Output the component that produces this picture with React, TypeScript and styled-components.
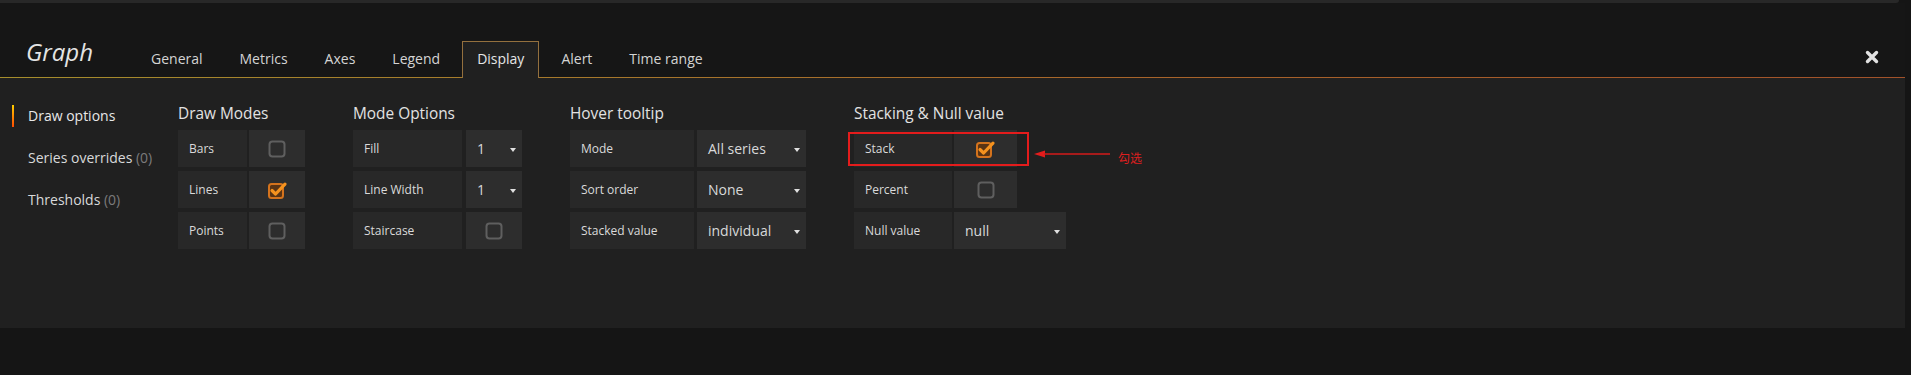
import React from 'react';
import styled, { createGlobalStyle, css } from 'styled-components';

const GlobalStyle = createGlobalStyle`
  html, body { margin: 0; padding: 0; background: #151515; }
  body {
    font-family: "Open Sans", "Liberation Sans", sans-serif;
    color: #d8d9da;
  }
  * { box-sizing: border-box; }
`;

const Page = styled.div`
  width: 1905px;
`;

const TopStrip = styled.div`
  height: 3px;
  margin-right: 6px;
  background: #282828;
  border-radius: 0 0 3px 0;
`;

const Header = styled.div`
  display: flex;
  align-items: flex-end;
  height: 75px;
  padding: 0 26px;
  background: #161616;
  border-bottom: 1px solid;
  border-image: linear-gradient(90deg, #a68e2c 0%, #a8642a 60%, #a2522a 100%) 1;
`;

const Title = styled.div`
  width: 110px;
  margin-bottom: 9px;
  font-size: 24px;
  line-height: 32px;
  font-style: italic;
  color: #e4e4e4;
`;

const Tabs = styled.nav`
  display: flex;
  align-items: flex-end;
`;

const Tab = styled.div<{ $active?: boolean }>`
  height: 37px;
  margin: 0 7px -1px 0;
  padding: 0 14px 2px;
  border: 1px solid transparent;
  border-bottom: none;
  font-size: 14px;
  line-height: 34px;
  color: #d4d4d4;
  white-space: nowrap;
  ${(p) =>
    p.$active &&
    css`
      background: #202020;
      border-color: #94703e;
      color: #e6e6e6;
    `}
`;

const Close = styled.div`
  margin: 0 0 13px auto;
  width: 14px;
  height: 14px;
  display: flex;
`;

const Panel = styled.div`
  display: flex;
  height: 250px;
  background: #202020;
`;

const SideMenu = styled.ul`
  list-style: none;
  margin: 0;
  width: 178px;
  flex: none;
  padding: 27px 0 0 12px;
`;

const MenuItem = styled.li<{ $active?: boolean }>`
  font-size: 14px;
  line-height: 22px;
  padding-left: 14px;
  margin-bottom: 20px;
  border-left: 2px solid transparent;
  color: #d8d9da;
  white-space: nowrap;
  ${(p) =>
    p.$active &&
    css`
      border-image: linear-gradient(180deg, #ffd500 0%, #ff4400 100%) 1;
      color: #e8e8e8;
    `}
`;

const Count = styled.span`
  color: #7b7b7b;
`;

const Sections = styled.div`
  display: flex;
  gap: 48px;
  padding-top: 26px;
`;

const Section = styled.section`
  display: flex;
  flex-direction: column;
`;

const Heading = styled.h5`
  margin: 0 0 6px;
  font-size: 15.4px;
  font-weight: 500;
  line-height: 20px;
  color: #e2e2e2;
  white-space: nowrap;
`;

const Row = styled.div<{ $gap: number }>`
  position: relative;
  display: flex;
  height: 37px;
  margin-bottom: 4px;
  gap: ${(p) => p.$gap}px;
`;

const Label = styled.div<{ $w: number }>`
  width: ${(p) => p.$w}px;
  display: flex;
  align-items: center;
  padding-left: 11px;
  background: #282828;
  font-size: 12px;
  color: #dadada;
  white-space: nowrap;
`;

const SwitchCell = styled.div<{ $w: number }>`
  width: ${(p) => p.$w}px;
  display: flex;
  align-items: center;
  justify-content: center;
  background: #2d2d2d;
`;

const Select = styled.div<{ $w: number }>`
  width: ${(p) => p.$w}px;
  display: flex;
  align-items: center;
  justify-content: space-between;
  padding: 0 6px 0 11px;
  background: #2d2d2d;
  font-size: 14px;
  color: #d8d9da;
  white-space: nowrap;
`;

const Caret = styled.span`
  width: 0;
  height: 0;
  margin-top: 2px;
  border-left: 3.5px solid transparent;
  border-right: 3.5px solid transparent;
  border-top: 4px solid #e0e0e0;
`;

const Highlight = styled.div`
  position: absolute;
  left: -6px;
  top: 2px;
  width: 181px;
  height: 34px;
  border: 2px solid #e41c1c;
  pointer-events: none;
`;

const Arrow = styled.svg`
  position: absolute;
  left: 180px;
  top: 19px;
`;

const Note = styled.span`
  position: absolute;
  left: 264px;
  top: 21px;
  font-family: "Noto Sans CJK SC", "Noto Sans", sans-serif;
  font-size: 12px;
  line-height: 14px;
  color: #dc1f1f;
  white-space: nowrap;
`;

const Unchecked = () => (
  <svg width="18" height="18" viewBox="0 0 18 18">
    <rect x="1.5" y="1.5" width="15" height="15" rx="3" fill="none" stroke="#5f5f5f" strokeWidth="2" />
  </svg>
);

const Checked = () => (
  <svg width="21" height="20" viewBox="0 0 21 20">
    <rect x="2" y="4" width="14" height="14" rx="2.5" fill="#5a3414" stroke="#d4731d" strokeWidth="2" />
    <polyline points="5,10.5 8.6,14 18,4.2" fill="none" stroke="#f5921e" strokeWidth="3.2" strokeLinecap="round" strokeLinejoin="round" />
  </svg>
);

const CloseIcon = () => (
  <svg width="14" height="14" viewBox="0 0 14 14">
    <path d="M2.5 2.5 L11.5 11.5 M11.5 2.5 L2.5 11.5" stroke="#e2e2e2" strokeWidth="3.4" strokeLinecap="round" />
  </svg>
);

type Field =
  | { label: string; kind: 'check'; checked?: boolean; annotate?: boolean }
  | { label: string; kind: 'select'; value: string };

type SectionDef = {
  title: string;
  labelW: number;
  gap: number;
  checkW: number;
  selectW: number;
  fields: Field[];
};

const sections: SectionDef[] = [
  {
    title: 'Draw Modes',
    labelW: 69,
    gap: 2,
    checkW: 56,
    selectW: 56,
    fields: [
      { label: 'Bars', kind: 'check' },
      { label: 'Lines', kind: 'check', checked: true },
      { label: 'Points', kind: 'check' },
    ],
  },
  {
    title: 'Mode Options',
    labelW: 109,
    gap: 4,
    checkW: 56,
    selectW: 56,
    fields: [
      { label: 'Fill', kind: 'select', value: '1' },
      { label: 'Line Width', kind: 'select', value: '1' },
      { label: 'Staircase', kind: 'check' },
    ],
  },
  {
    title: 'Hover tooltip',
    labelW: 124,
    gap: 3,
    checkW: 56,
    selectW: 109,
    fields: [
      { label: 'Mode', kind: 'select', value: 'All series' },
      { label: 'Sort order', kind: 'select', value: 'None' },
      { label: 'Stacked value', kind: 'select', value: 'individual' },
    ],
  },
  {
    title: 'Stacking & Null value',
    labelW: 98,
    gap: 2,
    checkW: 63,
    selectW: 112,
    fields: [
      { label: 'Stack', kind: 'check', checked: true, annotate: true },
      { label: 'Percent', kind: 'check' },
      { label: 'Null value', kind: 'select', value: 'null' },
    ],
  },
];

const tabs = ['General', 'Metrics', 'Axes', 'Legend', 'Display', 'Alert', 'Time range'];

export default function App() {
  return (
    <Page>
      <GlobalStyle />
      <TopStrip />
      <Header>
        <Title>Graph</Title>
        <Tabs>
          {tabs.map((t) => (
            <Tab key={t} $active={t === 'Display'}>
              {t}
            </Tab>
          ))}
        </Tabs>
        <Close>
          <CloseIcon />
        </Close>
      </Header>
      <Panel>
        <SideMenu>
          <MenuItem $active>Draw options</MenuItem>
          <MenuItem>
            Series overrides <Count>(0)</Count>
          </MenuItem>
          <MenuItem>
            Thresholds <Count>(0)</Count>
          </MenuItem>
        </SideMenu>
        <Sections>
          {sections.map((s) => (
            <Section key={s.title}>
              <Heading>{s.title}</Heading>
              {s.fields.map((f) => (
                <Row key={f.label} $gap={s.gap}>
                  <Label $w={s.labelW}>{f.label}</Label>
                  {f.kind === 'check' ? (
                    <SwitchCell $w={s.checkW}>{f.checked ? <Checked /> : <Unchecked />}</SwitchCell>
                  ) : (
                    <Select $w={s.selectW}>
                      <span>{f.value}</span>
                      <Caret />
                    </Select>
                  )}
                  {f.kind === 'check' && f.annotate && (
                    <>
                      <Highlight />
                      <Arrow width="76" height="10" viewBox="0 0 76 10">
                        <polygon points="0,5 11,1.5 11,8.5" fill="#e41c1c" />
                        <line x1="10" y1="5" x2="76" y2="5" stroke="#d41a1a" strokeWidth="1.3" />
                      </Arrow>
                      <Note>勾选</Note>
                    </>
                  )}
                </Row>
              ))}
            </Section>
          ))}
        </Sections>
      </Panel>
    </Page>
  );
}
